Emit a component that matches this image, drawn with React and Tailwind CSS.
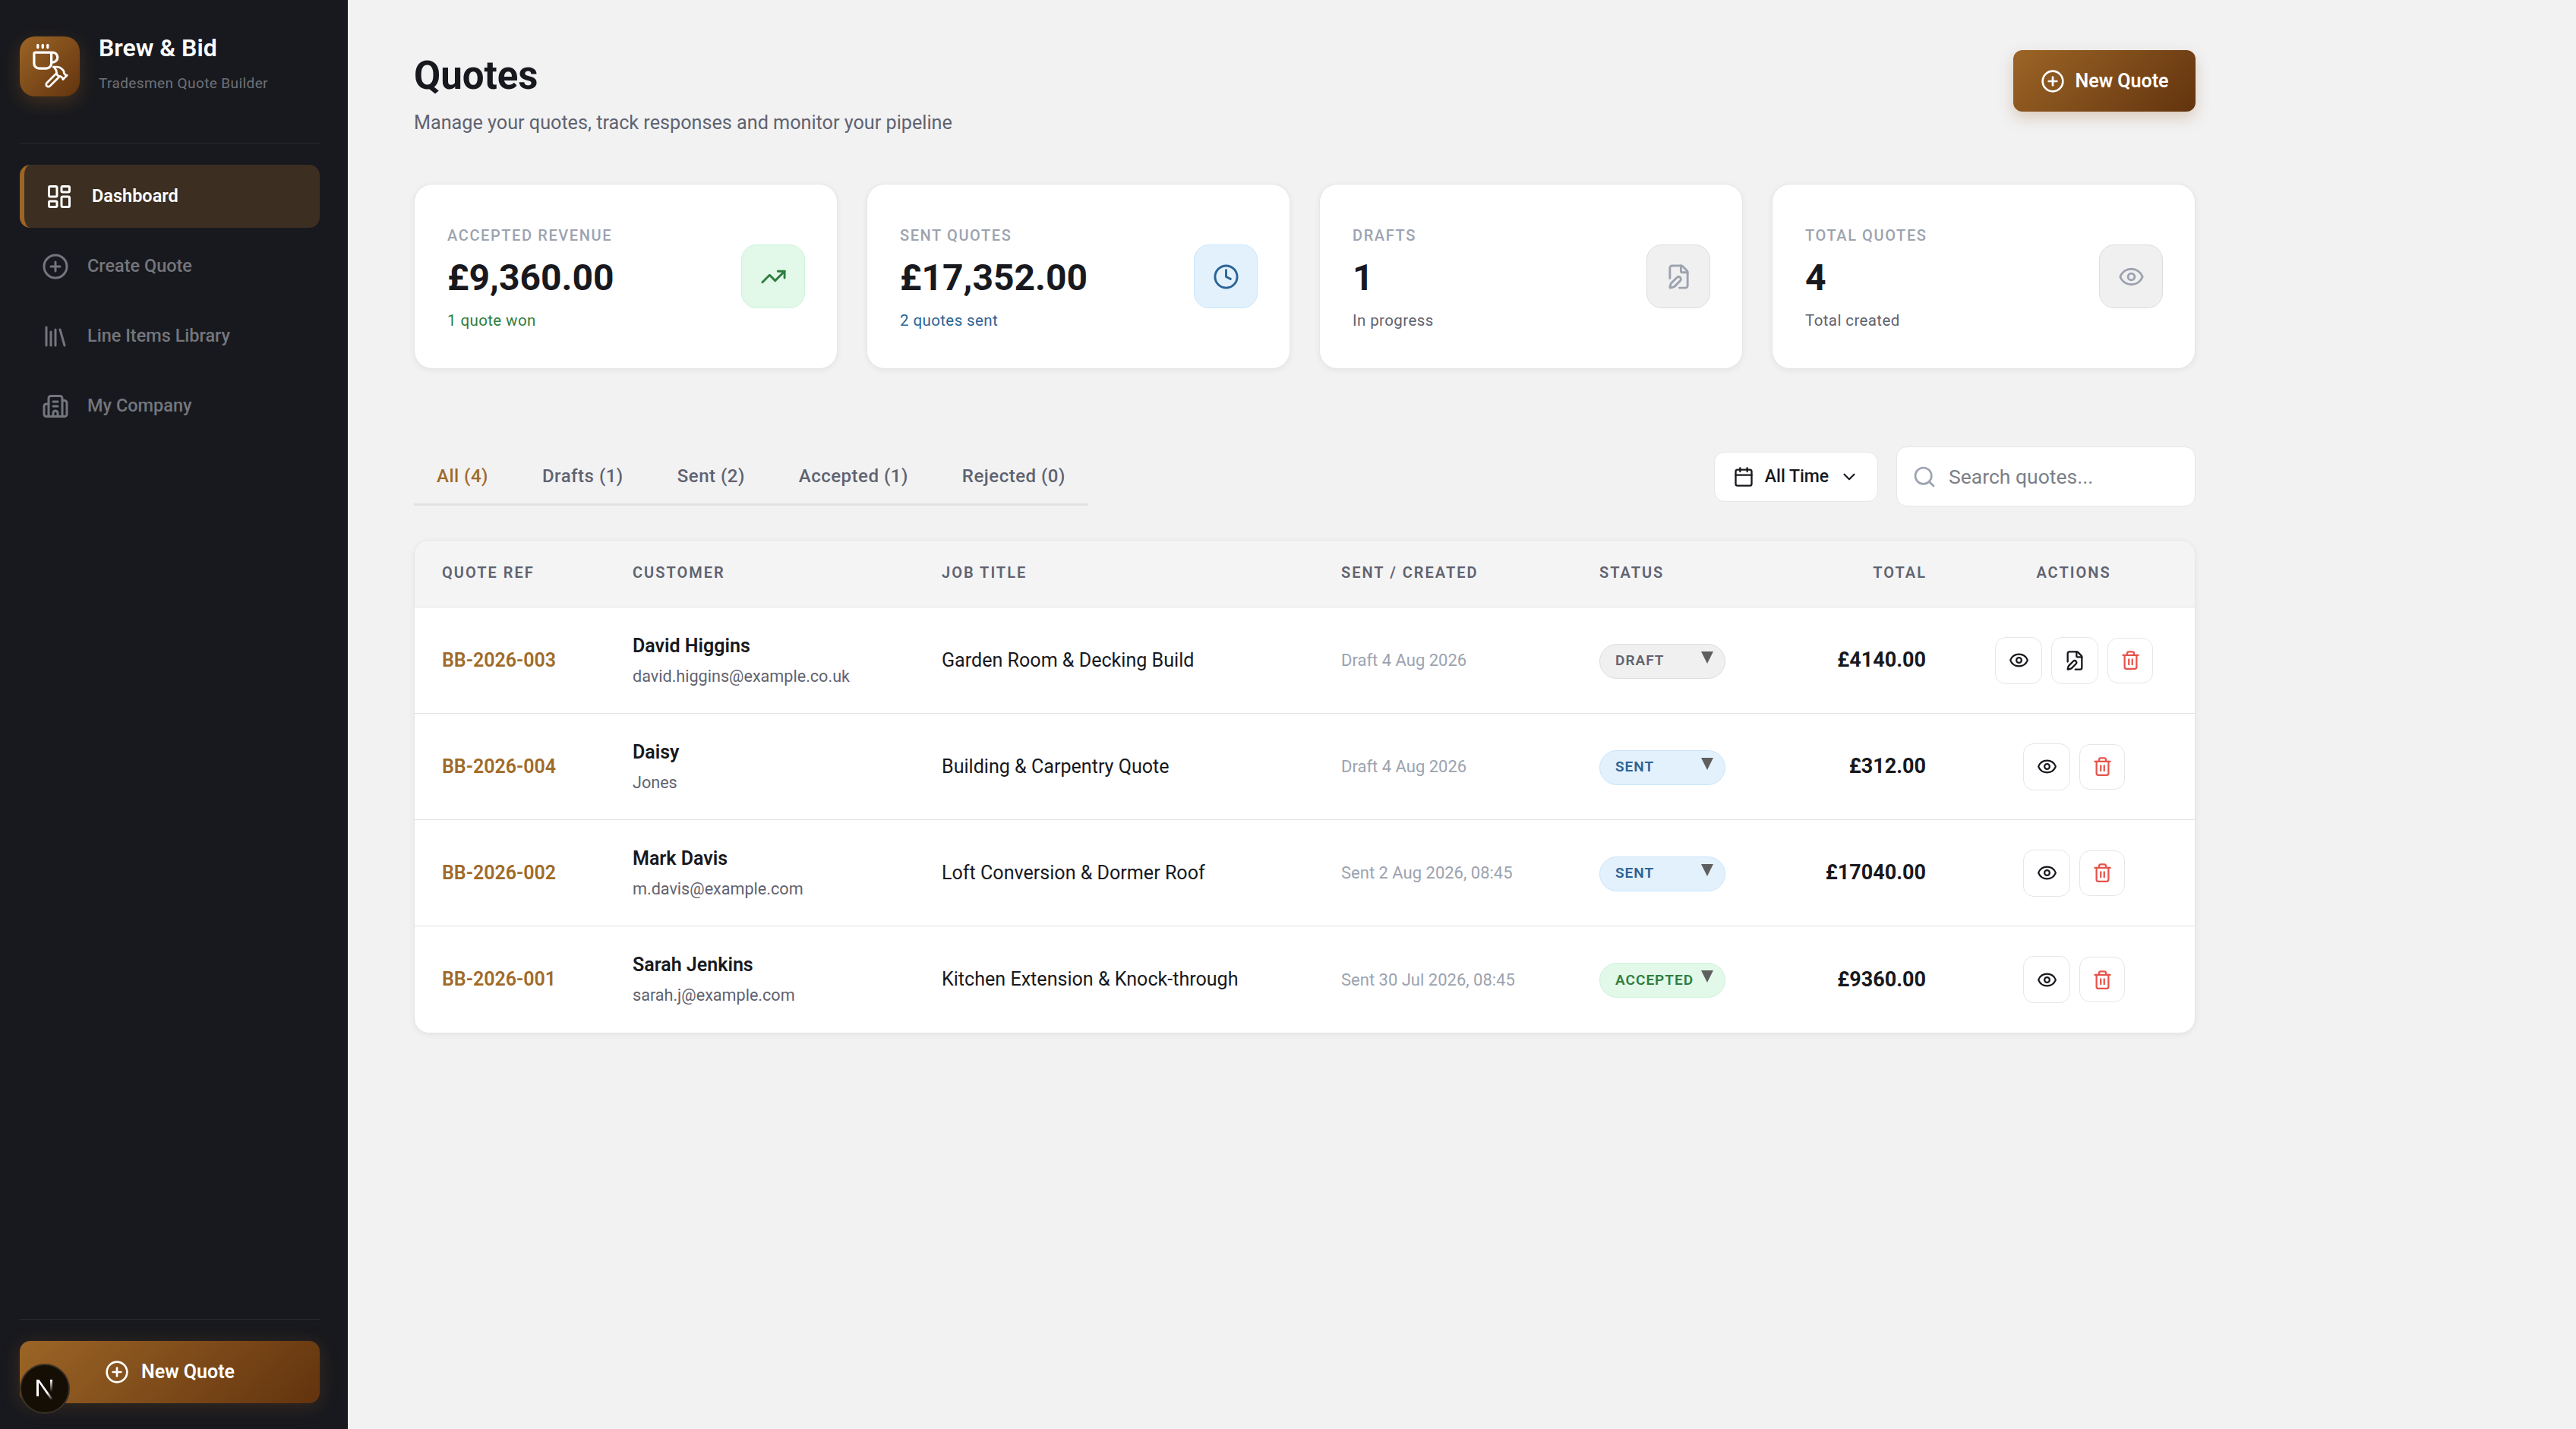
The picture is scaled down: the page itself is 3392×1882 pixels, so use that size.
import { Building2, Calendar, ChevronDown, CirclePlus, Clock, Coffee, Eye, FilePen, Hammer, LayoutDashboard, Library, Search, Trash2, TrendingUp } from "lucide-react";

const nav = [
  { icon: CirclePlus, label: "Create Quote" },
  { icon: Library, label: "Line Items Library" },
  { icon: Building2, label: "My Company" },
];

const stats = [
  { label: "ACCEPTED REVENUE", value: "£9,360.00", sub: "1 quote won", subClass: "text-[#2e7d3e]", tile: "bg-[#e2f8e9] border-[#cdf3d9] text-[#2e7d3e]", icon: TrendingUp },
  { label: "SENT QUOTES", value: "£17,352.00", sub: "2 quotes sent", subClass: "text-[#2a6496]", tile: "bg-[#e3f1fd] border-[#c9e5fa] text-[#2a6496]", icon: Clock },
  { label: "DRAFTS", value: "1", sub: "In progress", subClass: "text-[#5f6370]", tile: "bg-[#f0f0f1] border-[#dcdde0] text-[#9ca3af]", icon: FilePen },
  { label: "TOTAL QUOTES", value: "4", sub: "Total created", subClass: "text-[#5f6370]", tile: "bg-[#f0f0f1] border-[#dcdde0] text-[#9ca3af]", icon: Eye },
];

const tabs = ["All (4)", "Drafts (1)", "Sent (2)", "Accepted (1)", "Rejected (0)"];

const pills = {
  DRAFT: "bg-[#f0f0f1] border-[#dcdde0] text-[#5f6370]",
  SENT: "bg-[#e3f1fd] border-[#c9e5fa] text-[#2a6496]",
  ACCEPTED: "bg-[#e2f8e9] border-[#cdf3d9] text-[#2e7d3e]",
};

const rows = [
  { ref: "BB-2026-003", name: "David Higgins", email: "david.higgins@example.co.uk", job: "Garden Room & Decking Build", date: "Draft 4 Aug 2026", status: "DRAFT", total: "£4140.00", edit: true },
  { ref: "BB-2026-004", name: "Daisy", email: "Jones", job: "Building & Carpentry Quote", date: "Draft 4 Aug 2026", status: "SENT", total: "£312.00" },
  { ref: "BB-2026-002", name: "Mark Davis", email: "m.davis@example.com", job: "Loft Conversion & Dormer Roof", date: "Sent 2 Aug 2026, 08:45", status: "SENT", total: "£17040.00" },
  { ref: "BB-2026-001", name: "Sarah Jenkins", email: "sarah.j@example.com", job: "Kitchen Extension & Knock-through", date: "Sent 30 Jul 2026, 08:45", status: "ACCEPTED", total: "£9360.00" },
];

const cols = "grid grid-cols-[251px_407px_526px_340px_300px_201px_319px] items-center";
const brand = "bg-[linear-gradient(135deg,#9c6526,#62330e)]";

function IconBtn({ children, danger }) {
  return (
    <button className={`flex items-center justify-center rounded-[14px] border border-[#e5e6e8] bg-white ${danger ? "h-[60px] w-[60px] text-[#e5534b]" : "h-[62px] w-[62px] text-[#18191e]"}`}>
      {children}
    </button>
  );
}

export default function App() {
  return (
    <div className="flex min-h-[1882px] bg-[#f2f2f3] font-['Roboto',sans-serif] text-[#18191e]">
      <aside className="flex w-[458px] shrink-0 flex-col bg-[#18191e] pl-[26px] pr-[37px]">
        <div className="flex h-[189px] items-start gap-[25px] border-b border-[#2a2b31] pt-[48px]">
          <div className={`relative size-[79px] shrink-0 rounded-[20px] shadow-[0_8px_24px_rgba(156,101,38,0.3)] ${brand}`}>
            <Coffee className="absolute left-[14px] top-[8px] size-[39px] text-white" strokeWidth={2} />
            <Hammer className="absolute left-[32px] top-[36px] size-[33px] text-white" strokeWidth={2} />
          </div>
          <div className="-mt-[4px]">
            <div className="text-[32px] font-semibold leading-[38px] text-white">Brew &amp; Bid</div>
            <div className="mt-[16px] text-[19px] leading-[24px] tracking-[0.4px] text-[#6f7178]">Tradesmen Quote Builder</div>
          </div>
        </div>

        <nav className="mt-[28px] flex flex-col gap-[9px]">
          <a className="flex h-[83px] items-center gap-[25px] rounded-[14px] border-l-[6px] border-[#9c6526] bg-[#3c2e20] pl-[28px] text-[23.5px] font-semibold text-white">
            <LayoutDashboard className="size-[36px]" strokeWidth={2} />
            Dashboard
          </a>
          {nav.map((n) => (
            <a key={n.label} className="flex h-[83px] items-center gap-[24px] pl-[29px] text-[23.5px] font-medium text-[#74767d]">
              <n.icon className="size-[36px]" strokeWidth={2} />
              {n.label}
            </a>
          ))}
        </nav>

        <div className="mt-auto border-t border-[#2a2b31] pb-[34px] pt-[28px]">
          <div className="relative">
            <button className={`flex h-[82px] w-full items-center justify-center gap-[16px] rounded-[14px] text-[25px] font-semibold text-white shadow-[0_4px_24px_rgba(156,101,38,0.25)] ${brand}`}>
              <CirclePlus className="size-[32px]" strokeWidth={2} />
              New Quote
            </button>
            <div className="absolute left-0 top-[30px] flex size-[66px] items-center justify-center rounded-full border-[2px] border-[#3a3227] bg-[#150e05]">
              <svg viewBox="0 0 32 32" className="size-[32px]">
                <defs>
                  <linearGradient id="nFade" x1="0.3" y1="0" x2="1" y2="1">
                    <stop offset="0.6" stopColor="#fff" />
                    <stop offset="1" stopColor="#fff" stopOpacity="0" />
                  </linearGradient>
                  <linearGradient id="nBar" x1="0" y1="0" x2="0" y2="1">
                    <stop offset="0" stopColor="#fff" />
                    <stop offset="0.8" stopColor="#fff" stopOpacity="0" />
                  </linearGradient>
                </defs>
                <path d="M5 4h3v22H5z" fill="#fff" />
                <path d="M5.5 4h3l18.5 26h-3.5z" fill="url(#nFade)" />
                <path d="M23 4h3v20h-3z" fill="url(#nBar)" />
              </svg>
            </div>
          </div>
        </div>
      </aside>

      <main className="ml-[87px] w-[2346px]">
        <header className="flex h-[242px] items-start justify-between">
          <div className="pt-[70px]">
            <h1 className="text-[51px] font-bold leading-[60px] text-[#18191e]">Quotes</h1>
            <p className="mt-[17px] text-[25.2px] leading-[30px] text-[#5f6370]">Manage your quotes, track responses and monitor your pipeline</p>
          </div>
          <button className={`mt-[66px] flex h-[81px] w-[240px] items-center justify-center gap-[14px] rounded-[12px] text-[25px] font-semibold text-white shadow-[0_8px_20px_rgba(156,101,38,0.28)] ${brand}`}>
            <CirclePlus className="size-[32px]" strokeWidth={2} />
            New Quote
          </button>
        </header>

        <section className="grid grid-cols-4 gap-[38px]">
          {stats.map((s) => (
            <div key={s.label} className="flex h-[244px] items-center justify-between rounded-[24px] border border-[#e6e6e8] bg-white pl-[43px] pr-[42px] shadow-[0_2px_8px_rgba(0,0,0,0.06)]">
              <div className="pt-[3px]">
                <div className="text-[20px] font-medium leading-[24px] tracking-[1.6px] text-[#9ca3af]">{s.label}</div>
                <div className="mt-[14px] text-[48px] font-bold leading-[60px] text-[#18191e]">{s.value}</div>
                <div className={`mt-[14px] text-[20.5px] leading-[24px] tracking-[0.4px] ${s.subClass}`}>{s.sub}</div>
              </div>
              <div className={`flex size-[84px] items-center justify-center rounded-[20px] border ${s.tile}`}>
                <s.icon className="size-[35px]" strokeWidth={2} />
              </div>
            </div>
          ))}
        </section>

        <section className="mt-[102px] flex items-center justify-between">
          <div className="flex h-[76px] gap-[11px] border-b-[3px] border-[#e2e2e4]">
            {tabs.map((t, i) => (
              <button key={t} className={`px-[30px] pt-[2px] text-[24px] font-medium tracking-[0.5px] ${i === 0 ? "text-[#a06a28]" : "text-[#5f6370]"}`}>
                {t}
              </button>
            ))}
          </div>
          <div className="flex items-center gap-[24px]">
            <button className="flex h-[66px] w-[216px] items-center justify-center gap-[14px] rounded-[14px] border border-[#e5e6e8] bg-white pt-[1px] text-[23px] font-medium text-[#18191e]">
              <Calendar className="size-[28px]" strokeWidth={2} />
              All Time
              <ChevronDown className="size-[26px]" strokeWidth={2} />
            </button>
            <div className="flex h-[79px] w-[394px] items-center gap-[16px] rounded-[14px] border border-[#e5e6e8] bg-white pl-[20px]">
              <Search className="size-[32px] text-[#9ca3af]" strokeWidth={2} />
              <span className="text-[26.5px] text-[#7b7f88]">Search quotes...</span>
            </div>
          </div>
        </section>

        <section className="mt-[44px] overflow-hidden rounded-[20px] border border-[#e6e6e8] bg-white shadow-[0_2px_8px_rgba(0,0,0,0.06)]">
          <div className={`${cols} h-[88px] border-b border-[#e2e2e4] bg-[#f4f4f5] pb-[3px] text-[20px] font-semibold tracking-[2px] text-[#5f6370]`}>
            <div className="pl-[36px]">QUOTE REF</div>
            <div className="pl-[36px]">CUSTOMER</div>
            <div className="pl-[36px]">JOB TITLE</div>
            <div className="pl-[36px]">SENT / CREATED</div>
            <div className="pl-[36px]">STATUS</div>
            <div className="pr-[34px] text-right">TOTAL</div>
            <div className="text-center">ACTIONS</div>
          </div>
          {rows.map((r, i) => (
            <div key={r.ref} className={`${cols} h-[140px] ${i < rows.length - 1 ? "border-b border-[#e2e2e4]" : ""}`}>
              <div className="pl-[36px] text-[25px] font-semibold text-[#a06a28]">{r.ref}</div>
              <div className="pl-[36px]">
                <div className="text-[25px] font-semibold leading-[30px]">{r.name}</div>
                <div className="mt-[12px] text-[21.6px] leading-[26px] text-[#5f6370]">{r.email}</div>
              </div>
              <div className="pl-[36px] text-[25.1px]">{r.job}</div>
              <div className="pl-[36px] text-[22px] text-[#9ca3af]">{r.date}</div>
              <div className="pl-[36px]">
                <div className={`mt-[2px] flex h-[46px] w-[166px] items-center justify-between rounded-full border pl-[20px] pr-[15px] ${pills[r.status]}`}>
                  <span className="text-[19px] font-semibold tracking-[1px]">{r.status}</span>
                  <svg viewBox="0 0 16 16" className="mb-[10px] size-[16px] text-[#5f5f5f]">
                    <path d="M0 0h16L8 16z" fill="currentColor" />
                  </svg>
                </div>
              </div>
              <div className="whitespace-nowrap pr-[35px] text-right text-[27px] font-bold">{r.total}</div>
              <div className="flex items-center justify-center gap-[12px] pl-[1px]">
                <IconBtn>
                  <Eye className="size-[27px]" strokeWidth={2} />
                </IconBtn>
                {r.edit && (
                  <IconBtn>
                    <FilePen className="size-[28px]" strokeWidth={2} />
                  </IconBtn>
                )}
                <IconBtn danger>
                  <Trash2 className="size-[27px]" strokeWidth={2} />
                </IconBtn>
              </div>
            </div>
          ))}
        </section>
      </main>
    </div>
  );
}
